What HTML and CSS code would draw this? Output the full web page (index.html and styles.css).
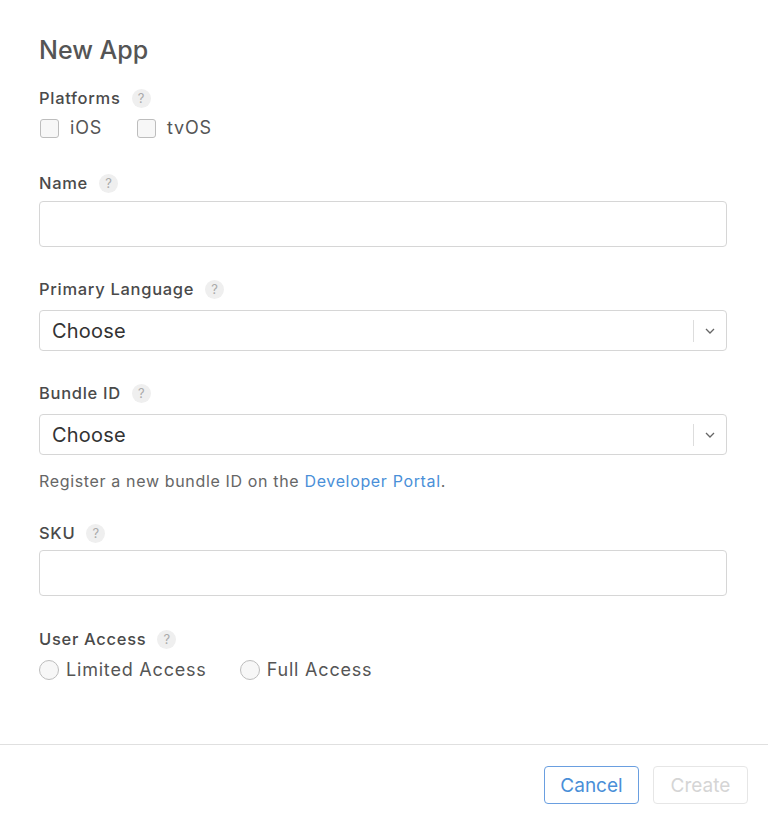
FILE: index.html
```html
<!DOCTYPE html>
<html lang="en">
<head>
<meta charset="utf-8">
<title>New App</title>
<link rel="stylesheet" href="styles.css">
</head>
<body>
<div class="dialog">
  <div class="content">
    <h1 class="title">New App</h1>

    <div class="label l-platforms">Platforms <span class="help">?</span></div>
    <div class="choices">
      <label class="choice"><span class="check"></span>iOS</label>
      <label class="choice"><span class="check"></span>tvOS</label>
    </div>

    <div class="label l-name">Name <span class="help">?</span></div>
    <div class="input in-name"></div>

    <div class="label l-lang">Primary Language <span class="help">?</span></div>
    <div class="select">
      <span class="select-text">Choose</span>
      <span class="select-sep"></span>
      <svg class="chev" width="10" height="6" viewBox="0 0 10 6"><path d="M1 1l4 4 4-4" fill="none" stroke="#666" stroke-width="1.3"/></svg>
    </div>

    <div class="label l-bundle">Bundle ID <span class="help">?</span></div>
    <div class="select">
      <span class="select-text">Choose</span>
      <span class="select-sep"></span>
      <svg class="chev" width="10" height="6" viewBox="0 0 10 6"><path d="M1 1l4 4 4-4" fill="none" stroke="#666" stroke-width="1.3"/></svg>
    </div>
    <p class="hint">Register a new bundle ID on the <a href="#" class="link">Developer Portal</a>.</p>

    <div class="label l-sku">SKU <span class="help">?</span></div>
    <div class="input in-sku"></div>

    <div class="label l-access">User Access <span class="help">?</span></div>
    <div class="choices radios">
      <label class="choice"><span class="radio"></span>Limited Access</label>
      <label class="choice"><span class="radio"></span>Full Access</label>
    </div>
  </div>
  <div class="footer">
    <button class="btn btn-cancel">Cancel</button>
    <button class="btn btn-create">Create</button>
  </div>
</div>
</body>
</html>
```

FILE: styles.css
```css
* { box-sizing: border-box; }
html, body {
  margin: 0;
  padding: 0;
  background: #fff;
}
body {
  font-family: Inter, "Liberation Sans", Arial, sans-serif;
  color: #555;
}
.dialog {
  width: 768px;
  height: 818px;
  display: flex;
  flex-direction: column;
}
.content {
  padding: 35px 41px 0 39px;
  height: 744px;
}
.title {
  margin: 0;
  font-size: 25px;
  line-height: 30px;
  font-weight: 500;
  color: #555;
}
.label {
  display: flex;
  align-items: center;
  font-size: 16.5px;
  line-height: 22px;
  font-weight: 500;
  color: #4a4a4a;
  letter-spacing: 0.7px;
}
.help {
  display: inline-flex;
  align-items: center;
  justify-content: center;
  width: 19px;
  height: 19px;
  border-radius: 50%;
  background: #efefef;
  color: #aaa;
  font-size: 13px;
  font-weight: 400;
  letter-spacing: 0;
  margin-left: 11px;
}
.l-platforms { margin-top: 22px; }
.l-name { margin-top: 32px; }
.l-lang { margin-top: 31px; }
.l-bundle { margin-top: 31px; }
.l-sku { margin-top: 30px; }
.l-access { margin-top: 32px; }

.choices {
  display: flex;
  font-size: 18px;
  line-height: 24px;
  margin-top: 7px;
  color: #555;
  letter-spacing: 0.8px;
}
.choice {
  display: flex;
  align-items: center;
}
.choice + .choice { margin-left: 34px; }
.check {
  width: 19px;
  height: 19px;
  border: 1px solid #bdbdbd;
  border-radius: 3px;
  background: #f7f7f7;
  margin-right: 11px;
  margin-left: 1px;
}
.radios { margin-top: 8px; }
.radios .choice + .choice { margin-left: 33px; }
.radio {
  width: 20px;
  height: 20px;
  border: 1px solid #bdbdbd;
  border-radius: 50%;
  background: #f7f7f7;
  margin-right: 7px;
}
.input {
  height: 46px;
  border: 1px solid #d6d6d6;
  border-radius: 4px;
  background: #fff;
}
.in-name { margin-top: 7px; }
.in-sku { margin-top: 6px; }
.select {
  margin-top: 10px;
  height: 41px;
  border: 1px solid #d6d6d6;
  border-radius: 4px;
  display: flex;
  align-items: center;
  padding-left: 12px;
}
.select-text {
  flex: 1;
  font-size: 20px;
  color: #333;
  letter-spacing: 0.2px;
}
.select-sep {
  width: 1px;
  height: 22px;
  background: #ddd;
}
.chev {
  margin: 0 11px 0 11px;
}
.hint {
  margin: 15px 0 0;
  font-size: 16px;
  line-height: 22px;
  color: #666;
  letter-spacing: 0.65px;
}
.link {
  color: #4a8fd8;
  text-decoration: none;
}
.footer {
  border-top: 1px solid #e0e0e0;
  flex: 1;
  display: flex;
  justify-content: flex-end;
  align-items: flex-start;
  padding: 21px 20px 0 0;
  gap: 14px;
}
.btn {
  font-family: inherit;
  font-size: 19px;
  height: 38px;
  border-radius: 4px;
  background: #fff;
  padding: 0;
}
.btn-cancel {
  width: 95px;
  border: 1px solid #6a9fe0;
  color: #4a8fd8;
}
.btn-create {
  width: 95px;
  border: 1px solid #e6e6e6;
  color: #d5d5d5;
}
```
